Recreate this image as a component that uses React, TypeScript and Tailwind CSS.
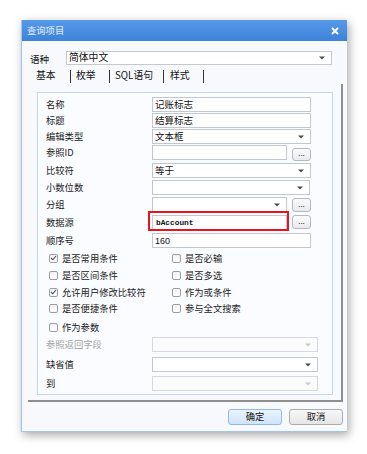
import React from 'react';

const FONT = "font-['Noto_Sans_CJK_SC','Liberation_Sans',sans-serif]";

function Arrow({ disabled }: { disabled?: boolean }) {
  return (
    <svg width="6" height="4" viewBox="0 0 6 4" className="shrink-0">
      <path d="M0 0.5h6L3 3.5z" fill={disabled ? '#c8c8c8' : '#4a4a4a'} />
    </svg>
  );
}

interface BoxProps {
  className: string;
  value?: React.ReactNode;
  select?: boolean;
  disabled?: boolean;
}

function Box({ className, value, select, disabled }: BoxProps) {
  return (
    <div
      className={`flex h-full items-center justify-between border pl-[2px] pr-[6px] text-[9.5px] leading-none text-[#111] ${
        disabled ? 'border-[#d6d9de] bg-[#fbfbfb]' : 'border-[#c3c8cf] bg-white'
      } ${className}`}
    >
      <span>{value}</span>
      {select && <Arrow disabled={disabled} />}
    </div>
  );
}

function Dots({ className }: { className: string }) {
  return (
    <div
      className={`flex w-[19px] items-center justify-center rounded-[3px] border border-[#b5b9bf] bg-gradient-to-b from-[#fbfbfb] to-[#e9eaec] pb-[3px] text-[8px] leading-none text-[#333] ${className}`}
    >
      ...
    </div>
  );
}

function Row({ label, mt, children, muted }: { label: string; mt: string; children: React.ReactNode; muted?: boolean }) {
  return (
    <div className={`relative flex h-[15px] shrink-0 items-start ${mt}`}>
      <span className={`flex h-[15px] w-[114px] items-center pl-[8px] text-[9.3px] leading-none ${muted ? 'text-[#a3a3a3]' : 'text-[#1a1a1a]'}`}>
        {label}
      </span>
      {children}
    </div>
  );
}

function Check({ label, checked, className }: { label: string; checked?: boolean; className: string }) {
  return (
    <div className={`flex items-center gap-[4px] ${className}`}>
      <div className="flex h-[9px] w-[9px] items-center justify-center rounded-[2px] border border-[#9a9ea4] bg-gradient-to-b from-[#f2f2f2] to-white">
        {checked && (
          <svg width="7" height="6" viewBox="0 0 7 6">
            <path d="M1 3l1.8 1.8L6 1" fill="none" stroke="#4a4a4a" strokeWidth="1.1" />
          </svg>
        )}
      </div>
      <span className="text-[9.3px] leading-none text-[#1a1a1a]">{label}</span>
    </div>
  );
}

function Tab({ label, className }: { label: string; className: string }) {
  return (
    <div className="flex h-[16px] items-center">
      <span className={`text-[9.8px] leading-none text-[#111] ${className}`}>{label}</span>
      <div className="h-[13px] w-px bg-[#333]" />
    </div>
  );
}

export default function App() {
  return (
    <div className={`h-[454px] w-[367px] bg-white pl-[21px] pt-[20px] ${FONT}`}>
      <div className="flex h-[412px] w-[326px] flex-col border-b border-l border-[#9fc4ee] bg-[#f7f9fd] shadow-[2px_3px_9px_rgba(0,0,0,0.35)]">
        {/* title bar */}
        <div className="flex h-[21px] shrink-0 items-center justify-between bg-gradient-to-b from-[#559ae8] to-[#3d82da] pl-[5px] pr-[8px]">
          <span className="text-[9.3px] leading-none text-[#e4eefb]">查询项目</span>
          <svg width="8" height="8" viewBox="0 0 8 8">
            <path d="M1 1l6 6M7 1L1 7" stroke="#fff" strokeWidth="1.8" />
          </svg>
        </div>

        {/* language */}
        <div className="mt-[10px] flex h-[14px] shrink-0 items-center">
          <span className="w-[44px] pl-[8px] pt-[4px] text-[9.6px] leading-none text-[#111]">语种</span>
          <Box className="w-[266px]" value={<span className="text-[9.8px]">简体中文</span>} select />
        </div>

        {/* tabs */}
        <div className="mt-[3px] flex h-[16px] shrink-0 items-center pl-[14px]">
          <Tab label="基本" className="w-[34px]" />
          <Tab label="枚举" className="w-[38px] pl-[5px]" />
          <Tab label="SQL语句" className="w-[53px] pl-[5px]" />
          <Tab label="样式" className="w-[39px] pl-[6px]" />
        </div>

        {/* tab page */}
        <div className="ml-[6px] flex w-[315px] shrink-0 flex-col border-b-2 border-r-2 border-[#8e8e8e] pb-[5px] pt-[8px]">
          <div className="ml-[9px] flex h-[303px] w-[296px] flex-col border border-[#c6d6ea] bg-[#fbfcff]">
            <Row label="名称" mt="mt-[4px]">
              <Box className="w-[159px]" value="记账标志" />
            </Row>
            <Row label="标题" mt="mt-[1px]">
              <Box className="w-[159px]" value="结算标志" />
            </Row>
            <Row label="编辑类型" mt="mt-[1px]">
              <Box className="w-[159px]" value="文本框" select />
            </Row>
            <Row label="参照ID" mt="mt-[1px]">
              <Box className="w-[135px]" />
              <Dots className="ml-[5px] mt-[3px] h-[13px]" />
            </Row>
            <Row label="比较符" mt="mt-[3px]">
              <Box className="w-[159px]" value="等于" select />
            </Row>
            <Row label="小数位数" mt="mt-[2px]">
              <Box className="w-[158px]" select />
            </Row>
            <Row label="分组" mt="mt-[2px]">
              <Box className="w-[135px]" select />
              <Dots className="ml-[5px] mt-[1px] h-[14px]" />
            </Row>
            <Row label="数据源" mt="mt-[3px]">
              <Box
                className="w-[135px]"
                value={<span className="pl-[1px] font-['Liberation_Mono',monospace] text-[7.8px] font-bold">bAccount</span>}
              />
              <Dots className="ml-[5px] h-[14px]" />
              <div className="absolute left-[110px] top-[-4px] h-[20px] w-[141px] border-2 border-[#e8141b]" />
            </Row>
            <Row label="顺序号" mt="mt-[3px]">
              <Box className="w-[159px]" value={<span className="font-['Liberation_Sans',sans-serif] text-[9px]">160</span>} />
            </Row>

            <div className="mt-[2px] flex h-[17px] shrink-0 items-center pl-[11px]">
              <Check className="w-[123px]" label="是否常用条件" checked />
              <Check className="" label="是否必输" />
            </div>
            <div className="flex h-[17px] shrink-0 items-center pl-[11px]">
              <Check className="w-[123px]" label="是否区间条件" />
              <Check className="" label="是否多选" />
            </div>
            <div className="flex h-[17px] shrink-0 items-center pl-[11px]">
              <Check className="w-[123px]" label="允许用户修改比较符" checked />
              <Check className="" label="作为或条件" />
            </div>
            <div className="flex h-[16px] shrink-0 items-center pl-[11px]">
              <Check className="w-[123px]" label="是否便捷条件" />
              <Check className="" label="参与全文搜索" />
            </div>
            <div className="mt-[2px] flex h-[17px] shrink-0 items-center pl-[11px]">
              <Check className="w-[123px]" label="作为参数" />
            </div>

            <Row label="参照返回字段" mt="mt-[1px]" muted>
              <Box className="w-[166px]" select disabled />
            </Row>
            <Row label="缺省值" mt="mt-[5px]">
              <Box className="w-[166px]" select />
            </Row>
            <Row label="到" mt="mt-[4px]">
              <Box className="w-[166px]" select disabled />
            </Row>
          </div>
        </div>

        {/* buttons */}
        <div className="mt-[7px] flex shrink-0 justify-end gap-[7px] pr-[4px]">
          <button className="flex h-[16px] w-[54px] items-center justify-center rounded-[3px] border border-[#8fbbe8] bg-gradient-to-b from-[#eaf4fd] to-[#cfe4f9] text-[9.3px] leading-none text-[#111]">
            确定
          </button>
          <button className="flex h-[16px] w-[54px] items-center justify-center rounded-[3px] border border-[#acacac] bg-gradient-to-b from-[#f8f8f8] to-[#e5e5e5] text-[9.3px] leading-none text-[#111]">
            取消
          </button>
        </div>
      </div>
    </div>
  );
}
